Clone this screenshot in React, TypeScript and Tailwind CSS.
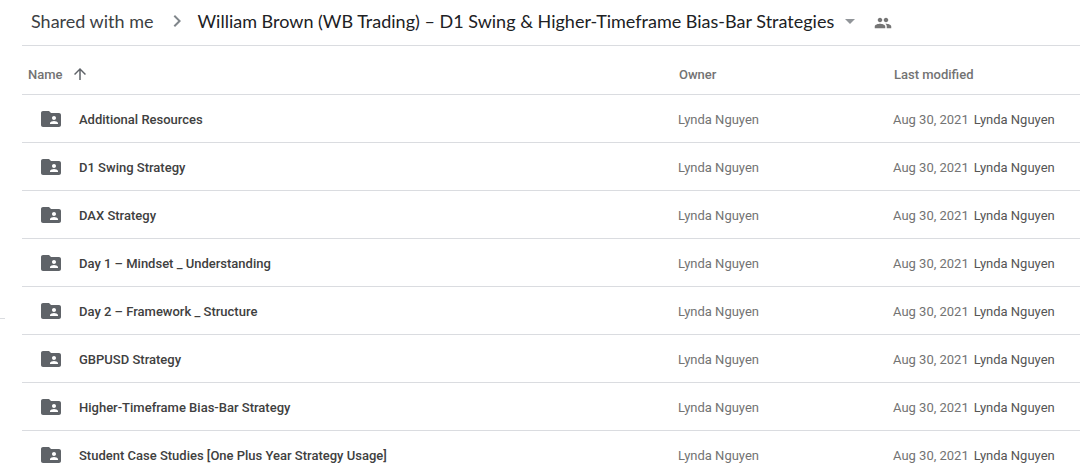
import {
  MdArrowDropDown,
  MdArrowUpward,
  MdChevronRight,
  MdFolderShared,
  MdPeople,
} from "react-icons/md";

type Folder = {
  name: string;
  owner: string;
  modified: string;
  modifiedBy: string;
};

const folders: Folder[] = [
  "Additional Resources",
  "D1 Swing Strategy",
  "DAX Strategy",
  "Day 1 – Mindset _ Understanding",
  "Day 2 – Framework _ Structure",
  "GBPUSD Strategy",
  "Higher-Timeframe Bias-Bar Strategy",
  "Student Case Studies [One Plus Year Strategy Usage]",
].map((name) => ({
  name,
  owner: "Lynda Nguyen",
  modified: "Aug 30, 2021",
  modifiedBy: "Lynda Nguyen",
}));

function Breadcrumbs() {
  return (
    <nav
      aria-label="Breadcrumb"
      className="flex h-[46px] items-center border-b border-[#dadce0] pb-1 pl-[9px] font-['Lato',sans-serif] text-lg whitespace-nowrap"
    >
      <a href="#shared" className="text-[#3c4043]">
        Shared with me
      </a>
      <MdChevronRight className="mr-2 ml-3 size-6 shrink-0 text-[#80868b]" />
      <button type="button" className="flex items-center gap-1 text-[#202124]">
        William Brown (WB Trading) – D1 Swing &amp; Higher-Timeframe Bias-Bar
        Strategies
        <MdArrowDropDown className="size-6 shrink-0 text-[#919599]" />
      </button>
      <button type="button" aria-label="Manage access" className="ml-3 pt-1">
        <MdPeople className="size-[18px] text-[#757575]" />
      </button>
    </nav>
  );
}

function FolderRow({ folder }: { folder: Folder }) {
  return (
    <tr>
      <td className="h-12 border-b border-[#dadce0] pl-[17px]">
        <div className="flex items-center gap-4">
          <MdFolderShared className="size-6 shrink-0 text-[#5f6368]" />
          <span className="pt-0.5 font-medium text-[#404040]">
            {folder.name}
          </span>
        </div>
      </td>
      <td className="border-b border-[#dadce0] pt-0.5">{folder.owner}</td>
      <td className="border-b border-[#dadce0] pt-0.5">
        <div className="flex gap-[5px]">
          <span>{folder.modified}</span>
          <span className="text-[#555555]">{folder.modifiedBy}</span>
        </div>
      </td>
    </tr>
  );
}

export default function App() {
  return (
    <div className="flex h-screen overflow-hidden bg-white font-['Roboto',sans-serif] text-[13px] leading-5 text-[#737373]">
      <aside className="w-[22px] shrink-0 pt-[318px]">
        <hr className="w-[5px] border-[#dadce0]" />
      </aside>
      <main className="min-w-0 flex-1">
        <Breadcrumbs />
        <table className="w-full table-fixed border-separate border-spacing-0 text-left whitespace-nowrap">
          <colgroup>
            <col />
            <col className="w-[215px]" />
            <col className="w-[187px]" />
          </colgroup>
          <thead>
            <tr>
              <th className="h-[49px] border-b border-[#dadce0] pt-2 pl-1.5 font-medium">
                <button type="button" className="flex items-center gap-2">
                  <span className="pt-0.5">Name</span>
                  <MdArrowUpward className="size-[18px] text-[#5f6368]" />
                </button>
              </th>
              <th className="border-b border-[#dadce0] pt-2.5 pl-px font-medium">
                Owner
              </th>
              <th className="border-b border-[#dadce0] pt-2.5 pl-px font-medium">
                Last modified
              </th>
            </tr>
          </thead>
          <tbody>
            {folders.map((folder) => (
              <FolderRow key={folder.name} folder={folder} />
            ))}
          </tbody>
        </table>
      </main>
    </div>
  );
}
